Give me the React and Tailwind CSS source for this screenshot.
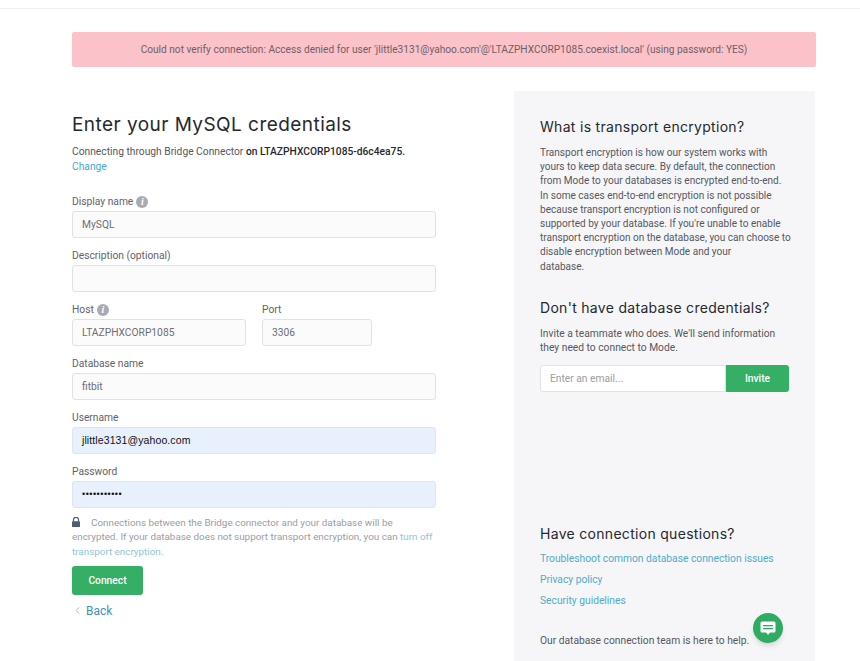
import { ChevronLeft } from 'lucide-react';

function Label({ children, info }) {
  return (
    <label className="flex h-[18px] items-center gap-[3px] text-[10.25px] text-[#5f6368]">
      {children}
      {info && (
        <span className="flex h-3 w-3 items-center justify-center rounded-full bg-[#a9abb3] font-['Liberation_Serif',serif] text-[10px] italic font-bold leading-none text-white">i</span>
      )}
    </label>
  );
}

function Field({ value, filled, password }) {
  return (
    <div
      className={`flex h-[27px] w-full items-center rounded-[3px] border px-[9px] ${
        filled
          ? "border-[#dfe4ee] bg-[#e8f0fe] font-['Liberation_Sans',sans-serif] text-[#111]"
          : 'border-[#e1e2e6] bg-[#fbfbfb] text-[#6b6e75]'
      } ${password ? 'text-[9px] tracking-[0.5px]' : filled ? 'text-[10.5px] tracking-[0.1px]' : 'text-[10.25px]'}`}
    >
      {value}
    </div>
  );
}

export default function App() {
  return (
    <div className="relative h-[661px] w-[860px] overflow-hidden bg-white font-['Roboto',sans-serif]">
      <div className="h-[9px] border-b border-[#f0f0f2]" />

      <div className="mx-[72px] mt-[23px] w-[744px]">
        <div className="flex h-[35px] items-center justify-center rounded-[2px] bg-[#fbc2ca] text-[10.13px] text-[#6f5f66]">
          Could not verify connection: Access denied for user 'jlittle3131@yahoo.com'@'LTAZPHXCORP1085.coexist.local' (using password: YES)
        </div>

        <div className="mt-[24px] flex justify-between pr-px">
          {/* left form */}
          <div className="w-[364px] pt-[22px]">
            <h1 className="font-['Inter',sans-serif] text-[19px] font-normal leading-6 tracking-[0.45px] text-[#26282d]">Enter your MySQL credentials</h1>
            <p className="mt-[8px] text-[10.25px] leading-[14px] text-[#55585e]">
              Connecting through Bridge Connector <span className="font-medium text-[#26282d]">on LTAZPHXCORP1085-d6c4ea75.</span>
            </p>
            <a className="block text-[10.25px] leading-[15px] text-[#44a9c9]">Change</a>

            <div className="mt-[19px] flex flex-col gap-[9px]">
              <div>
                <Label info>Display name</Label>
                <Field value="MySQL" />
              </div>
              <div>
                <Label>Description (optional)</Label>
                <Field value="" />
              </div>
              <div className="flex gap-4">
                <div className="w-[174px]">
                  <Label info>Host</Label>
                  <Field value="LTAZPHXCORP1085" />
                </div>
                <div className="w-[110px]">
                  <Label>Port</Label>
                  <Field value="3306" />
                </div>
              </div>
              <div>
                <Label>Database name</Label>
                <Field value="fitbit" />
              </div>
              <div>
                <Label>Username</Label>
                <Field filled value="jlittle3131@yahoo.com" />
              </div>
              <div>
                <Label>Password</Label>
                <Field filled password value="•••••••••••" />
              </div>
            </div>

            <p className="mt-[8px] text-[9.85px] leading-[14.3px] text-[#9a9da3]">
              <svg className="mr-[11px] inline-block align-[-1px]" width="8" height="10" viewBox="0 0 8 10">
                <path d="M1.5 4.5V2.8a2.5 2.5 0 0 1 5 0v1.7" fill="none" stroke="#4a5f75" strokeWidth="1.2" />
                <rect x="0" y="4.2" width="8" height="5.8" rx=".6" fill="#4a5f75" />
              </svg>
              Connections between the Bridge connector and your database will be encrypted. If your database does not support transport encryption, you can <a className="text-[#8fc3d8]">turn off transport encryption.</a>
            </p>

            <button className="mt-[7px] flex h-[29px] w-[71px] items-center justify-center rounded-[3px] bg-[#34af65] text-[10.25px] font-medium text-white">Connect</button>

            <a className="mt-[7px] flex items-center gap-[3px] text-[12px] text-[#3d93b5]">
              <ChevronLeft className="h-[13px] w-[11px] text-[#8a8d93]" strokeWidth={1.5} />
              Back
            </a>
          </div>

          {/* right panel */}
          <aside className="h-[600px] w-[301px] bg-[#f6f6f9] pl-[26px] pr-[23px] pt-[26px]">
            <h2 className="font-['Inter',sans-serif] text-[14px] font-normal leading-[19px] tracking-[0.3px] text-[#26282d]">What is transport encryption?</h2>
            <p className="mt-[10px] text-[10.05px] leading-[14.2px] text-[#55585e]">
              Transport encryption is how our system works with yours to keep data secure. By default, the connection from Mode to your databases is encrypted end-to-end. In some cases end-to-end encryption is not possible because transport encryption is not configured or supported by your database. If you're unable to enable transport encryption on the database, you can choose to disable encryption between Mode and your<br />database.
            </p>

            <h2 className="mt-[24px] font-['Inter',sans-serif] text-[14px] font-normal leading-[19px] tracking-[0.3px] text-[#26282d]">Don't have database credentials?</h2>
            <p className="mt-[10px] w-[249px] text-[10.25px] leading-[14.2px] text-[#55585e]">
              Invite a teammate who does. We'll send information they need to connect to Mode.
            </p>
            <div className="mt-[10px] flex h-[27px] w-[249px]">
              <div className="flex flex-1 items-center rounded-l-[3px] border border-[#e1e2e6] bg-white px-[9px] text-[10.25px] text-[#9a9da3]">Enter an email...</div>
              <button className="h-full w-[63px] rounded-r-[3px] bg-[#34af65] text-[10.25px] font-medium text-white">Invite</button>
            </div>

            <h2 className="mt-[132px] font-['Inter',sans-serif] text-[14px] font-normal leading-[19px] tracking-[0.3px] text-[#26282d]">Have connection questions?</h2>
            <div className="mt-[8px] flex flex-col gap-[6px] text-[10.25px] leading-[15px] text-[#4fabcb]">
              <a>Troubleshoot common database connection issues</a>
              <a>Privacy policy</a>
              <a>Security guidelines</a>
            </div>
            <p className="mt-[26px] text-[10.25px] leading-[14px] text-[#55585e]">Our database connection team is here to help.</p>
          </aside>
        </div>
      </div>

      {/* chat bubble */}
      <div className="absolute left-[753px] top-[613px] flex h-[30px] w-[30px] items-center justify-center rounded-full bg-[#2fab63] shadow-md">
        <svg width="16" height="15" viewBox="0 0 16 15">
          <path d="M2 .5h12A1.5 1.5 0 0 1 15.5 2v8a1.5 1.5 0 0 1-1.5 1.5h-4L8 14l-2-2.5H2A1.5 1.5 0 0 1 .5 10V2A1.5 1.5 0 0 1 2 .5z" fill="#fff" />
          <rect x="3" y="4" width="10" height="1.3" fill="#2fab63" />
          <rect x="3" y="7" width="10" height="1.3" fill="#2fab63" />
        </svg>
      </div>
    </div>
  );
}
